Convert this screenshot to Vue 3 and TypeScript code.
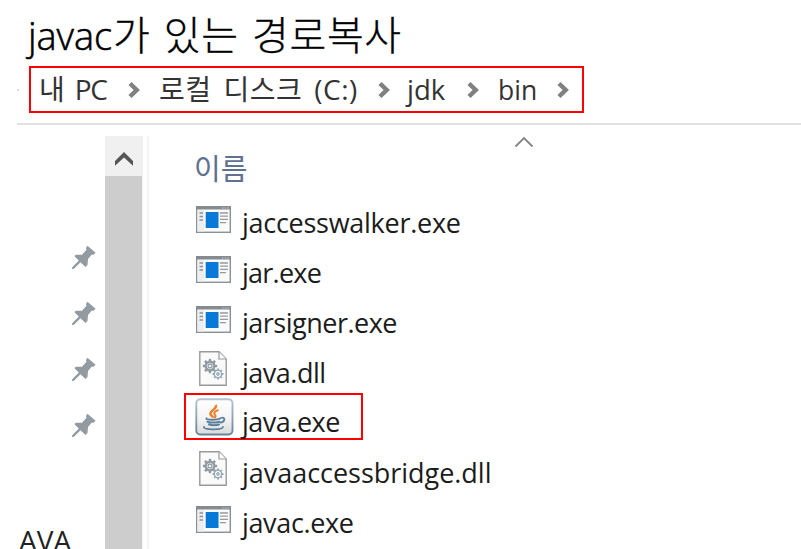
<script setup lang="ts">
type Kind = 'app' | 'dll' | 'java'
interface FileRow { name: string; kind: Kind; cls: string }

const files: FileRow[] = [
  { name: 'jaccesswalker.exe', kind: 'app', cls: 'long' },
  { name: 'jar.exe', kind: 'app', cls: 'short' },
  { name: 'jarsigner.exe', kind: 'app', cls: '' },
  { name: 'java.dll', kind: 'dll', cls: 'raised' },
  { name: 'java.exe', kind: 'java', cls: 'marked' },
  { name: 'javaaccessbridge.dll', kind: 'dll', cls: 'raised longest' },
  { name: 'javac.exe', kind: 'app', cls: 'last' },
]
const crumbs = [
  { label: '내 PC', cls: 'pc' },
  { label: '로컬 디스크 (C:)', cls: 'disk' },
  { label: 'jdk', cls: 'jdk' },
  { label: 'bin', cls: 'bin' },
]
const teeth = [0, 45, 90, 135, 180, 225, 270, 315]
</script>

<template>
  <main class="page">
    <h1 class="title"><span class="latin">javac</span><span class="hangul">가 있는 경로복사</span></h1>
    <div class="address">
      <i class="speck"></i>
      <nav class="crumbs">
        <span v-for="c in crumbs" :key="c.cls" class="crumb" :class="c.cls">
          <span class="label">{{ c.label }}</span>
          <svg class="chev" width="14" height="18" viewBox="0 0 14 18"><path d="M3 2.5 9.7 9 3 15.5" /></svg>
        </span>
      </nav>
    </div>
    <div class="rule"></div>
    <div class="body">
      <aside class="side">
        <svg v-for="n in 4" :key="n" class="pin" width="26" height="26" viewBox="0 0 26 26">
          <path d="M16.4 1.7 24.6 8.8 22.6 10.8 20.8 10.6 17 14.9 16.5 20.9 14.5 22.9 9.5 18.3 2.7 24.9 1 25 1.2 23.3 7.8 16.5 3.2 11.9 5.2 10.7 11 10.7 15.3 6.1 15.1 3.7Z" />
        </svg>
        <div class="cut">AVA</div>
      </aside>
      <div class="scroll">
        <div class="up"><svg width="20" height="18" viewBox="0 0 20 18"><path d="M1 12 10 3 19 12V16.8L10 8.4 1 16.8Z" /></svg></div>
        <div class="thumb"></div>
      </div>
      <div class="divider"></div>
      <section class="list">
        <div class="head">
          <span>이름</span>
          <svg class="sort" width="20" height="12" viewBox="0 0 20 12"><path d="M1.5 10.5 10 2 18.5 10.5" /></svg>
        </div>
        <div v-for="f in files" :key="f.name" class="row" :class="f.cls">
          <div class="icon">
            <svg v-if="f.kind === 'app'" width="35" height="27" viewBox="0 0 35 27">
              <rect x=".7" y=".7" width="33.6" height="25.6" fill="#fafafa" stroke="#8b9296" stroke-width="1.4" />
              <path d="M0 0H35V3.6H0Z" fill="#858c91" />
              <path d="M26 2H27.5M28.7 2H30.2M31.4 2H32.9" stroke="#c3c8cb" />
              <path d="M1.5 4H8V25.5H1.5Z" fill="#eee" />
              <path d="M3.5 7H7M3.5 10.5H7M3.5 14H7" stroke="#8d9091" stroke-width="1.4" />
              <path d="M24 7H32M24 10.2H32M24 13.4H32M24 16.6H30" stroke="#999" stroke-width="1.3" />
              <rect x="9.7" y="6" width="12.8" height="16" fill="#0879d9" />
            </svg>
            <svg v-else-if="f.kind === 'dll'" class="dll" width="28" height="35" viewBox="0 0 28 35">
              <path d="M.8.8H20L27.2 8V34.2H.8Z" fill="#fafafa" stroke="#999" stroke-width="1.4" />
              <path d="M20 1V8H27" fill="#fff" stroke="#999" stroke-width="1.2" />
              <g transform="translate(11 15)" stroke="#909ba1" fill="none">
                <path v-for="t in teeth" :key="t" d="M0-5V-7.2" stroke-width="2.4" :transform="`rotate(${t})`" />
                <circle r="4.4" stroke-width="2.2" fill="#dce1e4" /><circle r="1.9" stroke-width="1.1" fill="#f3f3f3" />
              </g>
              <g transform="translate(19 23)" stroke="#94a4ae" fill="none">
                <path v-for="t in teeth" :key="t" d="M0-4V-5.4" stroke-width="1.8" :transform="`rotate(${t})`" />
                <circle r="3.8" stroke-width="1.2" fill="#edf4f8" /><circle r="1.3" stroke-width="1" fill="#b8d1df" />
              </g>
            </svg>
            <svg v-else class="java" width="39" height="38" viewBox="0 0 39 38">
              <defs>
                <linearGradient id="tile" x2="0" y2="1"><stop stop-color="#fff" /><stop offset=".55" stop-color="#f4f4f4" /><stop offset="1" stop-color="#d9dadb" /></linearGradient>
                <linearGradient id="edge" x2="0" y2="1"><stop stop-color="#b3c4d4" /><stop offset="1" stop-color="#69839c" /></linearGradient>
              </defs>
              <rect x="1.3" y="1.3" width="36.2" height="35.2" rx="4" fill="url(#tile)" stroke="url(#edge)" stroke-width="1.9" />
              <path d="M20.8 7C22.5 11 14 13 15.5 16.2C16.2 17.8 18 18.7 18.4 19.6" fill="none" stroke="#ee8029" stroke-width="2.5" />
              <path d="M23.5 12C18.5 13.8 18.6 15.3 20 16.7C21.2 18 20.3 19.2 19.2 20" fill="none" stroke="#ee8029" stroke-width="2" />
              <g fill="none" stroke="#5c7f9b" stroke-linecap="round">
                <path d="M11.5 20.3C11 21.4 14 21.7 17 21.7S24 21.3 25 20.5" stroke-width="1.9" />
                <path d="M12.5 23.7C15 24.6 21 24.6 24.5 23.7M14 26.5C17 27.4 21 27.4 24 26.5" stroke-width="2" />
                <path d="M26 20C31 18.4 30 23.8 25.7 24.7" stroke-width="1.8" />
                <path d="M9 28.8C8 31 15 31.5 19 31.3C25 31.1 28 30.3 28 28.9" stroke-width="1.7" />
              </g>
            </svg>
          </div>
          <span class="name">{{ f.name }}</span>
        </div>
      </section>
    </div>
  </main>
</template>

<style>
body { background: #fff; }
</style>
<style scoped>
* { box-sizing: border-box; }
.page { width: 801px; height: 549px; overflow: hidden; display: flex; flex-direction: column; font-family: "Open Sans", "Noto Sans CJK KR", sans-serif; color: #222; }
.title { margin: 0; height: 66px; flex: none; padding: 8px 0 0 28px; display: flex; font-weight: 400; color: #000; font-size: 38px; line-height: 54px; white-space: pre; }
.latin { width: 85px; letter-spacing: -.1px; font-weight: 300; -webkit-text-stroke: .55px #000; }
.hangul { font-family: "Noto Sans CJK KR", sans-serif; font-size: 40px; line-height: 50px; font-weight: 300; letter-spacing: .6px; word-spacing: 4px; -webkit-text-stroke: .3px #000; }
.address { height: 47px; flex: none; display: flex; align-items: center; }
.speck { width: 2px; height: 2px; margin: 0 10px 0 17px; background: #ddd; }
.crumbs { width: 555px; height: 47px; border: 2px solid #f00; padding-left: 8px; display: flex; align-items: center; font-size: 26.5px; color: #333; white-space: pre; }
.crumb { display: flex; align-items: center; justify-content: space-between; flex: none; }
.label { line-height: 42px; }
.pc { width: 102px; margin-right: 18px; }
.pc .label, .disk .label { font-size: 28px; padding-bottom: 2px; }
.pc .label { word-spacing: 5px; letter-spacing: -1.2px; }
.disk { width: 232px; margin-right: 16px; }
.disk .label { letter-spacing: .55px; word-spacing: 4px; }
.jdk { width: 73px; margin-right: 18px; }
.jdk .label { font-size: 27.5px; }
.bin { width: 72px; }
.chev path { fill: none; stroke: #808080; stroke-width: 4.5; }
.rule { height: 2px; margin: 10px 0 0 17px; flex: none; background: #e1e1e1; }
.body { flex: 1; min-height: 0; display: flex; }
.side { width: 105px; display: flex; flex-direction: column; align-items: flex-end; padding: 119px 8px 0 0; gap: 30px; }
.pin { flex: none; display: block; }
.pin path { fill: #919ba1; }
.cut { align-self: flex-start; margin: 55px 0 0 19px; font-size: 28px; line-height: 34px; color: #222; }
.scroll { width: 38px; margin-top: 11px; background: #f0f0f0; display: flex; flex-direction: column; }
.up { height: 40px; display: flex; align-items: center; justify-content: center; padding-top: 3px; }
.up path { fill: #555; }
.thumb { flex: 1; width: 37px; background: #cdcdcd; }
.divider { width: 2px; margin: 11px 45px 0 4px; background: #f5f5f5; }
.list { flex: 1; }
.head { height: 73px; display: flex; padding-top: 21px; color: #5f7191; font: 400 29px/43px "Noto Sans CJK KR", sans-serif; }
.head span { width: 320px; }
.sort { margin-top: -10px; }
.sort path { fill: none; stroke: #858585; stroke-width: 1.9; }
.row { height: 50px; width: 340px; display: flex; align-items: center; }
.icon { width: 48px; flex: none; display: flex; padding: 0 0 8px 2px; }
.dll { margin-left: 3px; }
.raised .icon { padding-bottom: 10px; }
.java { margin-left: -1px; }
.name { font-size: 27px; line-height: 50px; letter-spacing: -.5px; color: #1c1c1c; }
.long .name { letter-spacing: -.27px; }
.short .name { letter-spacing: -.75px; }
.longest .name { letter-spacing: -.03px; }
.last .name { letter-spacing: -.35px; }
.marked { width: 179px; height: 47px; margin: -5px 0 8px -10px; padding: 0 0 0 8px; border: 2px solid #f00; }
.marked .icon { padding-bottom: 0; }
.marked .name { padding-top: 10px; }
</style>
